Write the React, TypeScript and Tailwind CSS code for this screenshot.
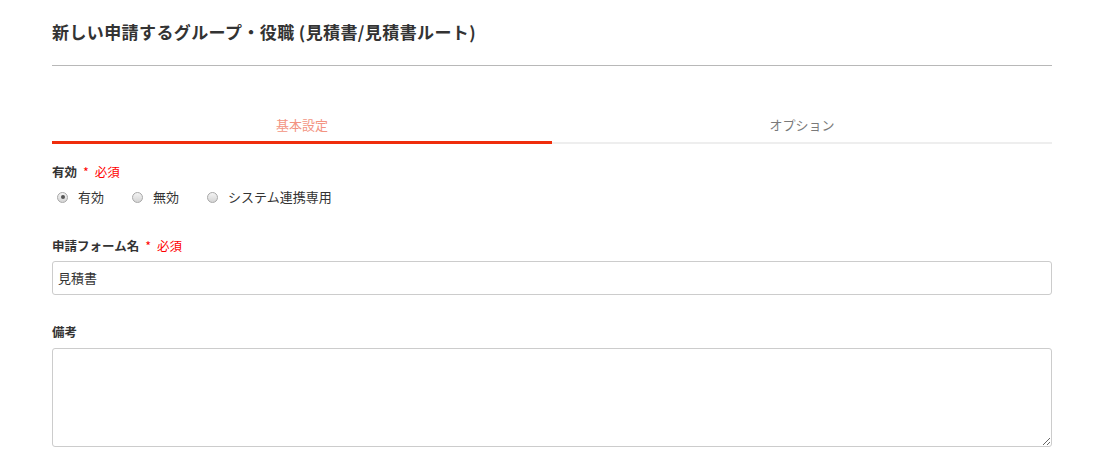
import React from "react";

function Radio({ checked, label }: { checked?: boolean; label: string }) {
  return (
    <label className="flex items-center gap-[10px]">
      <span className="w-[11px] h-[11px] rounded-full border border-[#a8a8a8] bg-gradient-to-b from-[#f4f4f4] to-[#d4d4d4] flex items-center justify-center">
        {checked && <span className="w-[4px] h-[4px] rounded-full bg-[#555]" />}
      </span>
      <span>{label}</span>
    </label>
  );
}

function Req() {
  return (
    <span className="text-[#f00] font-normal ml-[6px]">
      *<span className="ml-[6px]">必須</span>
    </span>
  );
}

export default function App() {
  return (
    <div
      className="bg-white w-[1103px] h-[459px] overflow-hidden text-[#333]"
      style={{ fontFamily: '"Noto Sans CJK JP", "Noto Sans", sans-serif' }}
    >
      <div className="mx-[52px] w-[1000px]">
        <h1 className="pt-[20px] h-[65px] text-[17px] font-bold leading-[24px] tracking-[0.4px] text-[#333]">
          新しい申請するグループ・役職 (見積書/見積書ルート)
        </h1>
        <div className="h-px bg-[#b8b8b8]" />
        <div className="mt-[50px] flex">
          <div className="flex-1 flex flex-col items-center">
            <div className="text-[13px] leading-[18px] text-[#f39482] h-[25px]">基本設定</div>
            <div className="h-[3px] w-full bg-[#ef2d0c]" />
          </div>
          <div className="flex-1 flex flex-col items-center">
            <div className="text-[13px] leading-[18px] text-[#7a7a7a] h-[25px]">オプション</div>
            <div className="h-[3px] w-full flex flex-col justify-center">
              <div className="h-[2px] bg-[#eeeeee]" />
            </div>
          </div>
        </div>

        <div className="mt-[20px] text-[12.5px] leading-[16px]">
          <div className="font-bold">
            有効<Req />
          </div>
          <div className="mt-[9px] flex gap-[28px] pl-[5px] text-[13px]">
            <Radio checked label="有効" />
            <Radio label="無効" />
            <Radio label="システム連携専用" />
          </div>

          <div className="mt-[33px] font-bold">
            申請フォーム名<Req />
          </div>
          <div className="mt-[7px] h-[34px] border border-[#cccccc] rounded-[3px] flex items-center px-[5px] text-[13px]">
            見積書
          </div>

          <div className="mt-[29px] font-bold">備考</div>
          <textarea className="mt-[8px] block w-full h-[99px] border border-[#cccccc] rounded-[3px] outline-none" />
        </div>
      </div>
    </div>
  );
}
